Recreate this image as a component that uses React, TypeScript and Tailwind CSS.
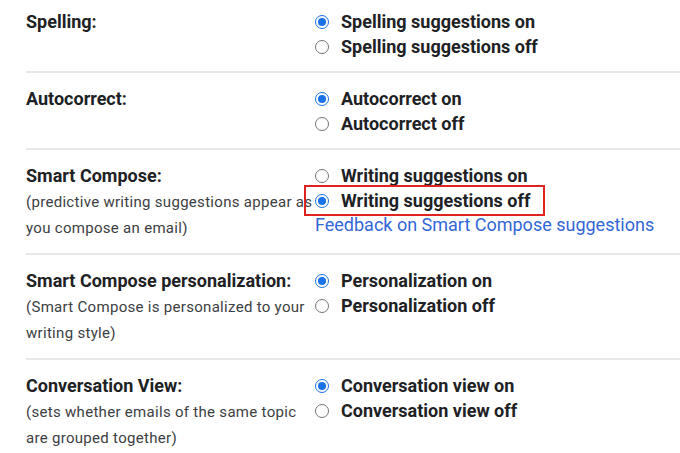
import React from 'react';

type Option = { label: string; checked: boolean };
type Setting = { title: string; desc?: string[]; options: Option[]; link?: string };

const settings: Setting[] = [
  {
    title: 'Spelling:',
    options: [
      { label: 'Spelling suggestions on', checked: true },
      { label: 'Spelling suggestions off', checked: false },
    ],
  },
  {
    title: 'Autocorrect:',
    options: [
      { label: 'Autocorrect on', checked: true },
      { label: 'Autocorrect off', checked: false },
    ],
  },
  {
    title: 'Smart Compose:',
    desc: ['(predictive writing suggestions appear as', 'you compose an email)'],
    options: [
      { label: 'Writing suggestions on', checked: false },
      { label: 'Writing suggestions off', checked: true },
    ],
    link: 'Feedback on Smart Compose suggestions',
  },
  {
    title: 'Smart Compose personalization:',
    desc: ['(Smart Compose is personalized to your', 'writing style)'],
    options: [
      { label: 'Personalization on', checked: true },
      { label: 'Personalization off', checked: false },
    ],
  },
  {
    title: 'Conversation View:',
    desc: ['(sets whether emails of the same topic', 'are grouped together)'],
    options: [
      { label: 'Conversation view on', checked: true },
      { label: 'Conversation view off', checked: false },
    ],
  },
];

function Radio({ checked }: { checked: boolean }) {
  return (
    <span
      className={`relative z-10 flex h-[14px] w-[14px] shrink-0 items-center justify-center rounded-full border-[1.5px] bg-white ${
        checked ? 'border-[#1a73e8]' : 'border-[#757575]'
      }`}
    >
      {checked && <span className="h-[8px] w-[8px] rounded-full bg-[#1a73e8]" />}
    </span>
  );
}

export default function App() {
  return (
    <div className="h-[453px] w-[680px] overflow-hidden bg-white pl-[26px] font-['Roboto',sans-serif] text-[#202124]">
      {settings.map((s, i) => (
        <div
          key={i}
          className={`flex ${i === 0 ? 'pt-[9px]' : 'pt-[13px]'} pb-[12px] ${
            i < settings.length - 1 ? 'border-b-2 border-[#e8e8e8]' : ''
          }`}
        >
          <div className="w-[289px] shrink-0">
            <div className="text-[18px] leading-[26px] font-bold">{s.title}</div>
            {s.desc && (
              <div className="whitespace-nowrap text-[15px] leading-[26px] tracking-[0.3px] text-[#3c4043]">
                {s.desc.map((d, j) => (
                  <div key={j}>{d}</div>
                ))}
              </div>
            )}
          </div>
          <div className="flex flex-col">
            {s.options.map((o, j) => (
              <div key={j} className="relative flex h-[25px] items-center gap-[12px]">
                <Radio checked={o.checked} />
                <span className="text-[18px] font-bold">{o.label}</span>
                {s.link && o.checked && (
                  <span className="pointer-events-none absolute -top-[3px] -left-[11px] h-[31px] w-[241px] border-[2.5px] border-[#e0231f]" />
                )}
              </div>
            ))}
            {s.link && (
              <a href="#" className="text-[18px] leading-[24px] text-[#3367d6]">
                {s.link}
              </a>
            )}
          </div>
        </div>
      ))}
    </div>
  );
}
